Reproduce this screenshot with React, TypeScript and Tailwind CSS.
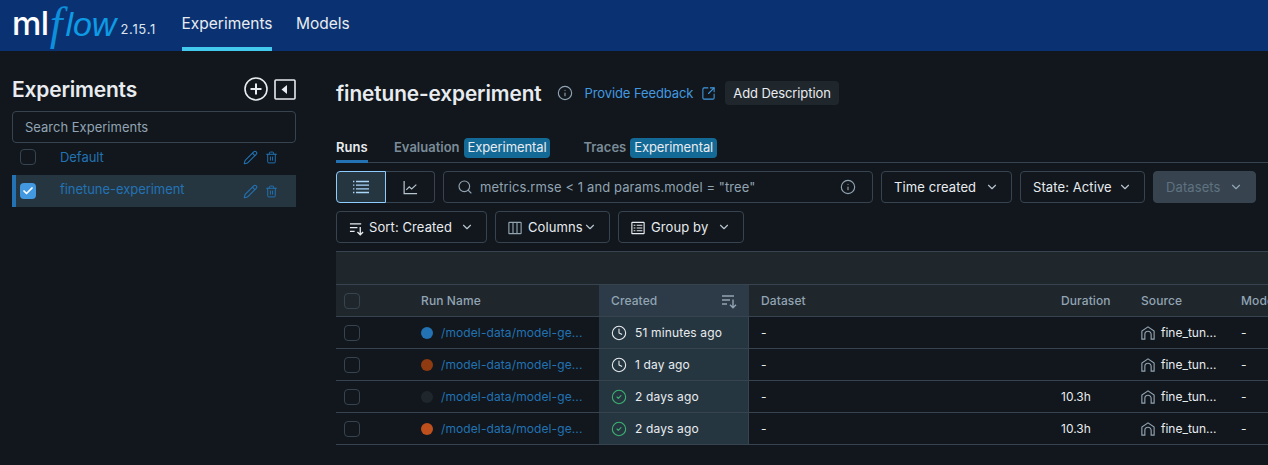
import { ChevronDown, Clock, CircleCheck, Info, Pencil, Search, SquareArrowOutUpRight, Trash2, Check } from 'lucide-react';

const font = { fontFamily: 'Inter, "Noto Sans", sans-serif' };

function SortIcon({ className }: { className?: string }) {
  return (
    <svg viewBox="0 0 16 16" className={className} fill="none" stroke="currentColor" strokeWidth="1.4">
      <path d="M1 3h12M1 7h8M1 11h5M12 6.500v8M9 11.800l3 2.900 3-2.900" />
    </svg>
  );
}

function ListIcon({ className }: { className?: string }) {
  return (
    <svg viewBox="0 0 16 16" className={className} fill="none" stroke="currentColor" strokeWidth="1.3">
      <path d="M3 2.500h13M3 6.200h13M3 9.800h13M3 13.500h13M0 2.500h1.400M0 6.200h1.400M0 9.800h1.400M0 13.500h1.400" />
    </svg>
  );
}

function ChartIcon({ className }: { className?: string }) {
  return (
    <svg viewBox="0 0 16 16" className={className} fill="none" stroke="currentColor" strokeWidth="1.3">
      <path d="M1.200 1v13.600H15M3.500 10.500l3.200-3.200 2.500 2.200 5-4.600" />
    </svg>
  );
}

function ColumnsIcon({ className }: { className?: string }) {
  return (
    <svg viewBox="0 0 16 16" className={className} fill="none" stroke="currentColor" strokeWidth="1.3">
      <rect x="1" y="1.500" width="14" height="13" rx="0.600" />
      <path d="M5.700 1.500v13M10.300 1.500v13" />
    </svg>
  );
}

function GroupIcon({ className }: { className?: string }) {
  return (
    <svg viewBox="0 0 16 16" className={className} fill="none" stroke="currentColor" strokeWidth="1.3">
      <rect x="1" y="1.500" width="14" height="13" rx="0.600" />
      <path d="M6.500 4.800H13M6.500 8H13M6.500 11.200H13M3 4.800h2M3 8h2M3 11.200h2" />
    </svg>
  );
}

function HomeIcon({ className }: { className?: string }) {
  return (
    <svg viewBox="0 0 16 16" className={className} fill="none" stroke="currentColor" strokeWidth="1.3">
      <path d="M1 15V5.800L8 1l7 4.800V15h-3.400V9.600a3.600 3.600 0 0 0-7.200 0V15z" />
    </svg>
  );
}

function CollapseIcon() {
  return (
    <svg viewBox="0 0 22 21" className="w-[22px] h-[21px] text-[#e8ecf0]" fill="none" stroke="currentColor" strokeWidth="1.6">
      <rect x="1" y="1" width="20" height="19" rx="1" />
      <path d="M13 6v9L7.500 10.500z" fill="currentColor" stroke="none" />
    </svg>
  );
}

function PlusCircle() {
  return (
    <svg viewBox="0 0 24 24" className="w-6 h-6 text-[#e8ecf0]" fill="none" stroke="currentColor" strokeWidth="1.6">
      <circle cx="12" cy="12" r="11" />
      <path d="M12 6.500v11M6.500 12h11" strokeWidth="2" />
    </svg>
  );
}

function Box() {
  return <div className="w-4 h-4 rounded-[4px] border border-[#37444f] shrink-0" />;
}

function SidebarRow({ name, selected }: { name: string; selected?: boolean }) {
  return (
    <div
      className={
        selected
          ? 'h-8 flex items-center bg-[#263640] border-l-[4px] border-[#2272b4] pl-1 pr-[18px]'
          : 'h-7 mb-1 flex items-center pl-2 pr-[18px]'
      }
    >
      {selected ? (
        <div className="w-4 h-4 rounded-[4px] bg-[#4299e0] flex items-center justify-center shrink-0">
          <Check className="w-3 h-3 text-white" strokeWidth={3.5} />
        </div>
      ) : (
        <Box />
      )}
      <span className={`ml-6 flex-1 text-[13px] text-[#2272b4] tracking-[-0.05px] ${selected ? 'pb-[2px]' : 'pt-[2px]'}`}>{name}</span>
      <Pencil className="w-[15px] h-[15px] text-[#2272b4]" strokeWidth={1.7} />
      <Trash2 className="w-[13px] h-[13px] ml-[7px] text-[#2272b4]" strokeWidth={1.8} />
    </div>
  );
}

function Dropdown({ label, width, disabled, tight, children }: { label: string; width: string; disabled?: boolean; tight?: boolean; children?: React.ReactNode }) {
  return (
    <div
      className={`h-8 ${width} shrink-0 px-[12px] rounded-[4px] border border-[#37444f] flex items-center justify-between text-[13px] ${
        disabled ? 'bg-[#37444f] text-[#5f7281]' : 'text-[#e8ecf0]'
      }`}
    >
      <span className={`flex items-center whitespace-nowrap pt-[2px] ${tight ? 'gap-[5px]' : 'gap-1.5'} tracking-[0.1px]`}>
        {children}
        {label}
      </span>
      <ChevronDown className={`w-[14px] h-[14px] ${disabled ? 'text-[#92a4b3]' : 'text-[#b8c4ce]'}`} strokeWidth={2} />
    </div>
  );
}

const columns = 'grid grid-cols-[73px_190px_150px_300px_80px_100px_1fr]';

const runs = [
  { color: '#2272b4', state: 'running', created: '51 minutes ago', duration: '' },
  { color: '#8f3a10', state: 'running', created: '1 day ago', duration: '' },
  { color: '#1f272d', state: 'done', created: '2 days ago', duration: '10.3h' },
  { color: '#be501e', state: 'done', created: '2 days ago', duration: '10.3h' },
];

export default function App() {
  return (
    <div style={font} className="w-[1268px] h-[465px] overflow-hidden bg-[#11171c] text-[#e8ecf0]">
      <header className="h-[51px] bg-[#0a3272] flex items-stretch">
        <div className="ml-3 w-[170px] flex items-center">
          <span className="text-[33px] leading-none font-medium text-white tracking-[-0.5px] -mt-[5px]">ml</span>
          <span className="ml-[1px] pr-[3px] text-[46px] leading-[50px] italic text-[#0d8fdc] font-['Liberation_Serif'] -mt-[4px]">f</span>
          <span className="text-[34px] leading-none italic text-[#0d9be5] -mt-[3px] font-['Liberation_Sans']">
            low
          </span>
          <span className="ml-[4px] mt-2 text-[13px] text-[#dbe4ec] tracking-[0.7px]">2.15.1</span>
        </div>
        <div className="w-[90px] mr-6 border-b-[4px] border-[#43c9ed] flex items-center justify-center text-[15.500px] text-[#e8ecf0] whitespace-nowrap">
          Experiments
        </div>
        <div className="flex items-center text-[15.500px] text-[#e8ecf0] pb-1">Models</div>
      </header>

      <div className="flex">
        <aside className="w-[336px] shrink-0 pl-3 pr-10 pt-[26px]">
          <div className="h-6 mb-[10px] flex items-center">
            <h2 className="flex-1 text-[21px] font-semibold tracking-[-0.2px] mt-[2px]">Experiments</h2>
            <PlusCircle />
            <div className="ml-[6px]">
              <CollapseIcon />
            </div>
          </div>
          <div className="h-8 rounded-[4px] border border-[#37444f] px-3 flex items-center text-[13px] text-[#92a4b3] pt-[2px]">
            Search Experiments
          </div>
          <SidebarRow name="Default" />
          <SidebarRow name="finetune-experiment" selected />
        </aside>

        <main className="flex-1 min-w-0 pt-[30px]">
          <div className="h-6 flex items-center">
            <h1 className="text-[20.800px] font-semibold tracking-[-0.1px] whitespace-nowrap pt-[2px]">finetune-experiment</h1>
            <Info className="w-4 h-4 ml-[15px] text-[#92a4b3]" strokeWidth={1.7} />
            <span className="ml-3 text-[13px] text-[#4299e0] tracking-[-0.1px] pt-[2px]">Provide Feedback</span>
            <SquareArrowOutUpRight className="w-[15px] h-[15px] ml-2 text-[#4299e0]" strokeWidth={1.7} />
            <div className="ml-[9px] h-6 px-2 rounded-[4px] bg-[#1f272d] flex items-center text-[13px] tracking-[-0.1px] pt-[2px]">
              Add Description
            </div>
          </div>

          <div className="mt-[30px] h-7 border-b border-[#37444f] flex items-stretch text-[13px] font-semibold">
            <div className="w-8 border-b-[3px] -mb-px border-[#2272b4] flex items-center whitespace-nowrap pt-px">Runs</div>
            <div className="ml-[26px] pb-[2px] flex items-center text-[#7b8c99] whitespace-nowrap">
              Evaluation
              <span className="ml-1 h-5 px-1 rounded-[4px] bg-[#136a96] text-[#e8ecf0] flex items-center font-normal tracking-[-0.1px]">Experimental</span>
            </div>
            <div className="ml-[33px] pb-[2px] flex items-center text-[#7b8c99] whitespace-nowrap">
              Traces
              <span className="ml-1 h-5 px-1 rounded-[4px] bg-[#136a96] text-[#e8ecf0] flex items-center font-normal tracking-[-0.1px]">Experimental</span>
            </div>
          </div>

          <div className="mt-2 flex gap-2">
            <div className="w-[99px] h-8 flex shrink-0">
              <div className="w-[50px] bg-[#263640] border border-[#8fcdff] rounded-l-[4px] flex items-center justify-center text-[#a9d5f8]">
                <ListIcon className="w-4 h-4" />
              </div>
              <div className="flex-1 border border-l-0 border-[#37444f] rounded-r-[4px] flex items-center justify-center text-[#b8c4ce]">
                <ChartIcon className="w-[15px] h-[15px]" />
              </div>
            </div>
            <div className="w-[430px] h-8 shrink-0 rounded-[4px] border border-[#37444f] px-[13px] flex items-center text-[13px] text-[#92a4b3]">
              <Search className="w-4 h-4 mr-[7px] text-[#92a4b3]" strokeWidth={1.7} />
              <span className="flex-1 tracking-[0.1px] pt-[2px]">metrics.rmse &lt; 1 and params.model = "tree"</span>
              <Info className="w-4 h-4 -ml-1 mr-[3px] text-[#92a4b3]" strokeWidth={1.7} />
            </div>
            <Dropdown label="Time created" width="w-[131px]" />
            <Dropdown label="State: Active" width="w-[125px]" />
            <Dropdown label="Datasets" width="w-[103px]" disabled />
          </div>

          <div className="mt-2 flex gap-2">
            <Dropdown label="Sort: Created" width="w-[151px]" tight>
              <SortIcon className="w-[15px] h-[15px] text-[#e8ecf0]" />
            </Dropdown>
            <Dropdown label="Columns" width="w-[115px]">
              <ColumnsIcon className="w-[14px] h-[14px] text-[#92a4b3]" />
            </Dropdown>
            <Dropdown label="Group by" width="w-[126px]">
              <GroupIcon className="w-[14px] h-[14px] text-[#e8ecf0]" />
            </Dropdown>
          </div>

          <div className="mt-2 h-[33px] bg-[#1f272d] border-t border-[#37444f]" />
          <div className={`${columns} h-[33px] bg-[#1f272d] border-t border-b border-[#37444f] text-xs font-medium text-[#92a4b3] items-stretch tracking-[0.1px]`}>
            <div className="pl-2 flex items-center"><Box /></div>
            <div className="pl-3 flex items-center">Run Name</div>
            <div className="pl-3 pr-3 bg-[#2c3b47] flex items-center justify-between">
              Created
              <SortIcon className="w-4 h-4" />
            </div>
            <div className="pl-3 flex items-center">Dataset</div>
            <div className="pl-3 flex items-center">Duration</div>
            <div className="pl-3 flex items-center">Source</div>
            <div className="pl-3 flex items-center overflow-hidden whitespace-nowrap">Models</div>
          </div>

          {runs.map((run, i) => (
            <div key={i} className={`${columns} h-8 border-b border-[#37444f] text-xs items-stretch`}>
              <div className="pl-2 flex items-center"><Box /></div>
              <div className="pl-3 flex items-center">
                <span className="w-3 h-3 rounded-full shrink-0" style={{ backgroundColor: run.color }} />
                <span className="ml-2 text-[#2272b4] whitespace-nowrap tracking-[0.1px]">/model-data/model-ge...</span>
              </div>
              <div className="pl-3 bg-[#263640] border-r border-[#37444f] flex items-center">
                {run.state === 'running' ? (
                  <Clock className="w-4 h-4 text-[#e8ecf0] shrink-0" strokeWidth={1.6} />
                ) : (
                  <CircleCheck className="w-4 h-4 text-[#3cb371] shrink-0" strokeWidth={1.6} />
                )}
                <span className="ml-2 whitespace-nowrap tracking-[0.15px]">{run.created}</span>
              </div>
              <div className="pl-3 flex items-center">-</div>
              <div className="pl-3 flex items-center">{run.duration}</div>
              <div className="pl-3 flex items-center whitespace-nowrap">
                <HomeIcon className="w-[14px] h-[14px] text-[#92a4b3] shrink-0" />
                <span className="ml-[6px]">fine_tun...</span>
              </div>
              <div className="pl-3 flex items-center">-</div>
            </div>
          ))}
        </main>
      </div>
    </div>
  );
}
